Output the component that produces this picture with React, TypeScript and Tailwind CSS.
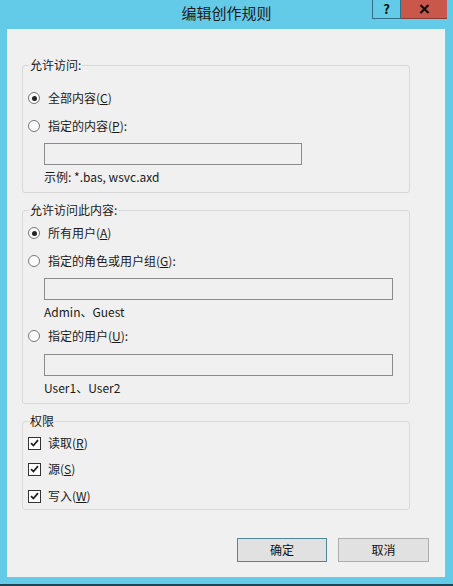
const font = { fontFamily: "'Noto Sans CJK SC', 'Noto Sans', sans-serif" };

function Radio({ checked, children }: { checked?: boolean; children: React.ReactNode }) {
  return (
    <div className="flex items-center h-[20px] pl-[5px]">
      <span className="w-[12px] h-[12px] rounded-full border border-[#777] bg-[#fdfdfd] flex items-center justify-center shrink-0">
        {checked && <span className="w-[5px] h-[5px] rounded-full bg-[#222]" />}
      </span>
      <span className="ml-[8px] text-[12px] leading-none text-[#1a1a1a]">{children}</span>
    </div>
  );
}

function Check({ children }: { children: React.ReactNode }) {
  return (
    <div className="flex items-center h-[18px] pl-[5px]">
      <span className="w-[13px] h-[13px] border border-[#333] bg-white flex items-center justify-center shrink-0">
        <svg width="9" height="8" viewBox="0 0 9 8">
          <path d="M1 4.2 L3.4 6.5 L8 1.2" fill="none" stroke="#222" strokeWidth="1.8" />
        </svg>
      </span>
      <span className="ml-[7px] text-[12px] leading-none text-[#1a1a1a]">{children}</span>
    </div>
  );
}

function TextBox({ w }: { w: string }) {
  return <div className={`${w} h-[22px] ml-[21px] border border-[#8a8a8a] bg-[#f0f0f0]`} />;
}

function Hint({ children }: { children: React.ReactNode }) {
  return (
    <div className="h-[16px] ml-[21px] flex items-center text-[12px] leading-none text-[#1a1a1a]">
      {children}
    </div>
  );
}

function Group({ title, children, className }: { title: string; children: React.ReactNode; className: string }) {
  return (
    <div className={`relative ml-[15px] w-[388px] border border-[#d8d8d8] rounded-[3px] ${className}`}>
      <span className="absolute -top-[8px] left-[6px] px-[1px] bg-[#f0f0f0] text-[12px] leading-[14px] text-[#1a1a1a]">
        {title}
      </span>
      {children}
    </div>
  );
}

export default function App() {
  return (
    <div className="w-[453px] h-[586px] bg-[#63cae7] flex flex-col border-b-2 border-[#1d4556]" style={font}>
      {/* Title bar */}
      <div className="relative h-[29px] flex items-center justify-center">
        <span className="text-[15px] text-[#1b1b1b] -mt-[2px]">编辑创作规则</span>
        <div className="absolute top-0 right-[6px] flex h-[19px]">
          <div className="w-[29px] border-l border-b border-r border-[#2f6f86] flex items-center justify-center text-[13px] font-bold text-[#111]">
            ?
          </div>
          <div className="w-[46px] bg-[#c9574c] border-b border-[#8c3a32] flex items-center justify-center">
            <svg width="11" height="10" viewBox="0 0 11 10">
              <path d="M1.5 1 L9.5 9 M9.5 1 L1.5 9" stroke="#111" strokeWidth="2.2" />
            </svg>
          </div>
        </div>
      </div>

      {/* Client area */}
      <div className="ml-[7px] w-[438px] h-[548px] bg-[#f0f0f0] border-t border-r border-[#e9f5f9] pt-[35px]">
        <Group title="允许访问:" className="h-[128px] pt-[22px]">
          <Radio checked>
            全部内容(<u>C</u>)
          </Radio>
          <div className="mt-[8px]">
            <Radio>
              指定的内容(<u>P</u>):
            </Radio>
          </div>
          <div className="mt-[7px]">
            <TextBox w="w-[258px]" />
          </div>
          <div className="mt-[4px]">
            <Hint>示例: *.bas, wsvc.axd</Hint>
          </div>
        </Group>

        <Group title="允许访问此内容:" className="h-[194px] mt-[17px] pt-[12px]">
          <Radio checked>
            所有用户(<u>A</u>)
          </Radio>
          <div className="mt-[8px]">
            <Radio>
              指定的角色或用户组(<u>G</u>):
            </Radio>
          </div>
          <div className="mt-[7px]">
            <TextBox w="w-[349px]" />
          </div>
          <div className="mt-[4px]">
            <Hint>Admin、Guest</Hint>
          </div>
          <div className="mt-[6px]">
            <Radio>
              指定的用户(<u>U</u>):
            </Radio>
          </div>
          <div className="mt-[8px]">
            <TextBox w="w-[349px]" />
          </div>
          <div className="mt-[4px]">
            <Hint>User1、User2</Hint>
          </div>
        </Group>

        <Group title="权限" className="h-[89px] mt-[17px] pt-[12px]">
          <Check>
            读取(<u>R</u>)
          </Check>
          <div className="mt-[8px]">
            <Check>
              源(<u>S</u>)
            </Check>
          </div>
          <div className="mt-[9px]">
            <Check>
              写入(<u>W</u>)
            </Check>
          </div>
        </Group>

        <div className="flex justify-end gap-[11px] mt-[28px] pr-[15px]">
          <button className="w-[90px] h-[24px] bg-[#e1e1e1] border border-[#4e8798] text-[12px] text-[#111]">
            确定
          </button>
          <button className="w-[91px] h-[24px] bg-[#e1e1e1] border border-[#adadad] text-[12px] text-[#111]">
            取消
          </button>
        </div>
      </div>
    </div>
  );
}
